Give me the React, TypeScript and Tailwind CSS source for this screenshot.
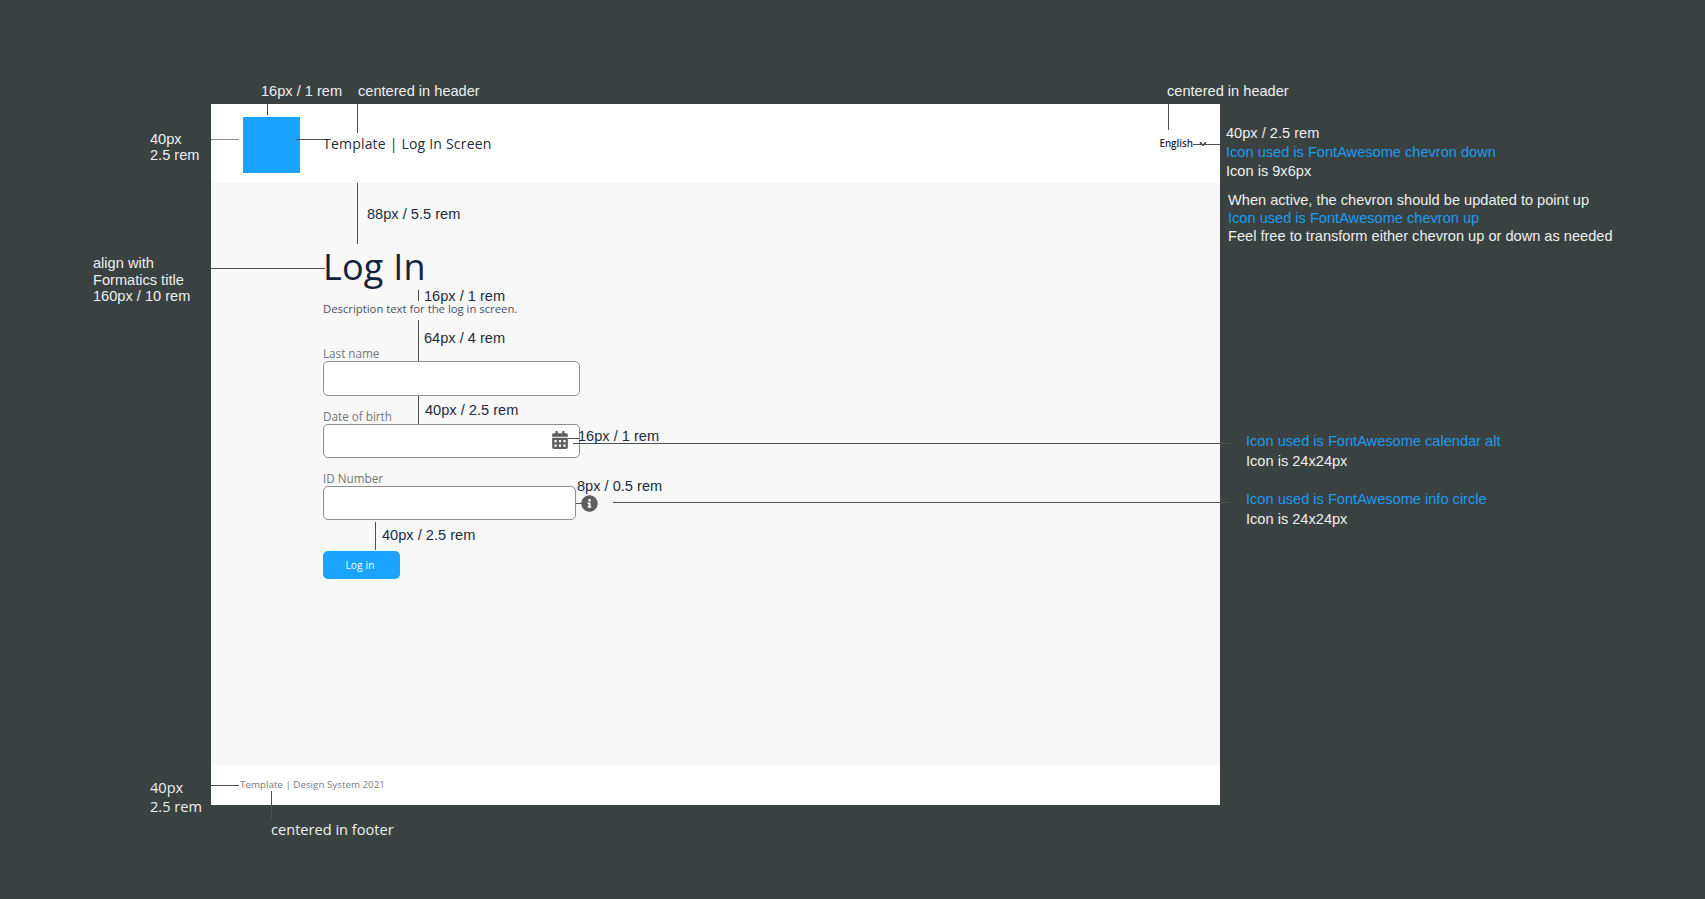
import { FaCalendarAlt, FaChevronDown, FaInfoCircle } from 'react-icons/fa'
import type { ReactNode } from 'react'

// annotation block on the spec canvas, lines stack by flow inside it
function Note({ className, children }: { className: string; children: ReactNode }) {
  return <div className={`absolute flex flex-col whitespace-nowrap text-[14.6px] leading-[16px] font-['Liberation_Sans',sans-serif] ${className}`}>{children}</div>
}

// one redline on the spec canvas
function Line({ className }: { className: string }) {
  return <div className={`absolute bg-[#4b5052] ${className}`} />
}

const labelClass = 'block h-[16px] text-[11.7px] leading-[16px] font-medium text-[#737679]'
const inputClass = 'block h-[34px] rounded-[5px] border border-[#8e8e8e] bg-white'
const blue = 'text-[#1a9bf0]'

export default function App() {
  return (
    <div className="relative h-[899px] w-[1705px] overflow-hidden bg-[#3a4141] pt-[104px] pl-[211px] font-['Open_Sans',sans-serif]">
      <div className="flex h-[701px] w-[1009px] flex-col">
        <header className="flex h-[79px] shrink-0 items-center justify-between bg-white pr-[13px] pl-[32px]">
          <div className="flex items-center gap-[23px]">
            <div className="mt-[2px] h-[56px] w-[57px] bg-[#1aa3ff]" />
            <div className="text-[14px] font-medium tracking-[0.2px] text-[#1f2d40]">Template | Log In Screen</div>
          </div>
          <button className="mt-[1px] flex items-center gap-[6px] text-[9.8px] font-semibold text-[#1f2d40]">
            English
            <FaChevronDown className="h-[8px] w-[8px]" />
          </button>
        </header>

        <main className="flex flex-1 flex-col items-start bg-[#f8f8f9] pt-[64px] pl-[112px]">
          <h1 className="h-[40px] text-[36px] leading-[40px] font-medium tracking-[0.2px] text-[#12233b]">Log In</h1>
          <p className="mt-[15px] h-[14px] text-[11.3px] leading-[14px] text-[#465063]">Description text for the log in screen.</p>

          <label className={`${labelClass} mt-[29px]`}>Last name</label>
          <input className={`${inputClass} h-[35px] w-[257px]`} />

          <label className={`${labelClass} mt-[12px]`}>Date of birth</label>
          <div className="relative">
            <input className={`${inputClass} w-[257px]`} />
            <FaCalendarAlt className="absolute top-[7px] right-[11px] h-[18px] w-[18px] text-[#5f5f5f]" />
          </div>

          <label className={`${labelClass} mt-[12px]`}>ID Number</label>
          <div className="flex items-center gap-[5px]">
            <input className={`${inputClass} w-[253px]`} />
            <FaInfoCircle className="mt-[1px] h-[17px] w-[17px] text-[#5f5f5f]" />
          </div>

          <button className="mt-[31px] h-[28px] w-[77px] rounded-[5px] bg-[#1aa3ff] pr-[3px] text-[10px] font-medium tracking-[0.2px] text-white">Log in</button>
        </main>

        <footer className="flex h-[40px] shrink-0 items-center bg-white pl-[29px]">
          <span className="text-[9.8px] text-[#7b7d80]">Template | Design System 2021</span>
        </footer>
      </div>

      {/* redlines */}
      <Line className="top-[104px] left-[267px] h-[11px] w-px" />
      <Line className="top-[104px] left-[357px] h-[29px] w-px" />
      <Line className="top-[139px] left-[211px] h-px w-[28px] bg-[#8a8a8a]" />
      <Line className="top-[139px] left-[296px] h-px w-[27px]" />
      <Line className="top-[183px] left-[357px] h-[61px] w-px" />
      <Line className="top-[268px] left-[211px] h-px w-[114px]" />
      <Line className="top-[290px] left-[418px] h-[11px] w-px" />
      <Line className="top-[320px] left-[418px] h-[41px] w-px" />
      <Line className="top-[396px] left-[418px] h-[28px] w-px" />
      <Line className="top-[438px] left-[568px] h-px w-[11px]" />
      <Line className="top-[443px] left-[573px] h-px w-[658px]" />
      <Line className="top-[503px] left-[576px] h-px w-[6px]" />
      <Line className="top-[502px] left-[613px] h-px w-[618px]" />
      <Line className="top-[522px] left-[375px] h-[28px] w-px" />
      <Line className="top-[104px] left-[1168px] h-[26px] w-px" />
      <Line className="top-[144px] left-[1193px] h-px w-[27px]" />
      <Line className="top-[785px] left-[211px] h-px w-[28px]" />
      <Line className="top-[791px] left-[271px] h-[29px] w-px" />

      {/* left and top notes */}
      <Note className="top-[83px] left-[261px] text-[#eef0f0]">16px / 1 rem</Note>
      <Note className="top-[83px] left-[358px] text-[#eef0f0]">centered in header</Note>
      <Note className="top-[131px] left-[150px] text-[#eef0f0]">
        <span>40px</span>
        <span>2.5 rem</span>
      </Note>
      <Note className="top-[255px] left-[93px] gap-[0.5px] text-[#eef0f0]">
        <span>align with</span>
        <span>Formatics title</span>
        <span>160px / 10 rem</span>
      </Note>

      {/* notes over the form */}
      <Note className="top-[206px] left-[367px] text-[#1c2b40]">88px / 5.5 rem</Note>
      <Note className="top-[290px] left-[424px] text-[#1c2b40]">
        <span className="leading-[12px]">16px / 1 rem</span>
      </Note>
      <Note className="top-[330px] left-[424px] text-[#1c2b40]">64px / 4 rem</Note>
      <Note className="top-[402px] left-[425px] text-[#1c2b40]">40px / 2.5 rem</Note>
      <Note className="top-[428px] left-[578px] text-[#1c2b40]">16px / 1 rem</Note>
      <Note className="top-[478px] left-[577px] text-[#1c2b40]">8px / 0.5 rem</Note>
      <Note className="top-[527px] left-[382px] text-[#1c2b40]">40px / 2.5 rem</Note>

      {/* right notes */}
      <Note className="top-[83px] left-[1167px] text-[#eef0f0]">centered in header</Note>
      <Note className="top-[125px] left-[1226px] gap-[3px] text-[#eef0f0]">
        <span>40px / 2.5 rem</span>
        <span className={blue}>Icon used is FontAwesome chevron down</span>
        <span>Icon is 9x6px</span>
        <div className="mt-[10px] ml-[2px] flex flex-col gap-[2px]">
          <span>When active, the chevron should be updated to point up</span>
          <span className={blue}>Icon used is FontAwesome chevron up</span>
          <span>Feel free to transform either chevron up or down as needed</span>
        </div>
      </Note>
      <Note className="top-[433px] left-[1246px] gap-[4px] text-[#eef0f0]">
        <span className={blue}>Icon used is FontAwesome calendar alt</span>
        <span>Icon is 24x24px</span>
      </Note>
      <Note className="top-[491px] left-[1246px] gap-[4px] text-[#eef0f0]">
        <span className={blue}>Icon used is FontAwesome info circle</span>
        <span>Icon is 24x24px</span>
      </Note>

      {/* footer notes */}
      <Note className="top-[779px] left-[150px] gap-[3px] font-['Open_Sans',sans-serif] text-[#eef0f0]">
        <span>40px</span>
        <span>2.5 rem</span>
      </Note>
      <Note className="top-[821px] left-[271px] font-['Open_Sans',sans-serif] text-[#eef0f0]">centered in footer</Note>
    </div>
  )
}
